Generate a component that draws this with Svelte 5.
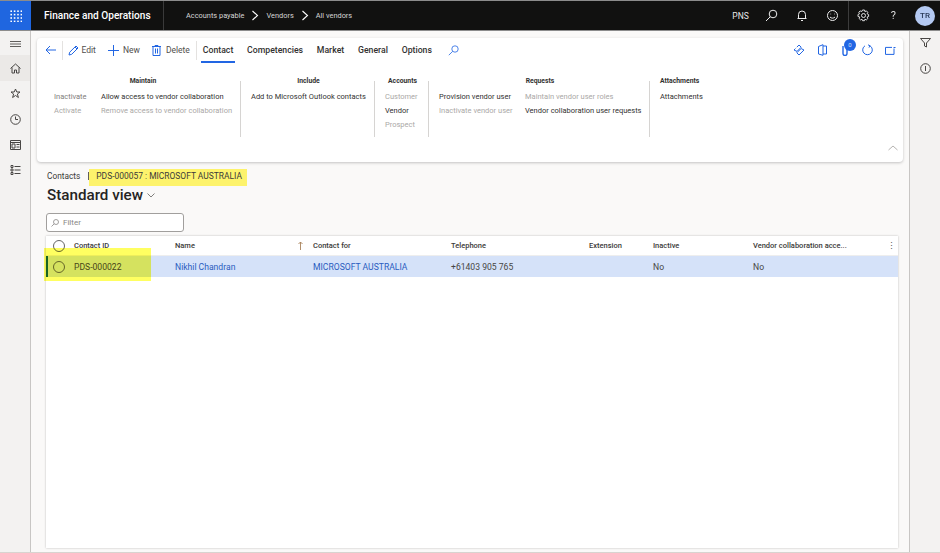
<script>
  const crumbs = ["Vendors", "All vendors"];
  const tabs = ["Competencies", "Market", "General", "Options"];
  const columns = [
    { label: "Contact ID", w: 101 },
    { label: "Name", w: 138, sort: true },
    { label: "Contact for", w: 138 },
    { label: "Telephone", w: 138 },
    { label: "Extension", w: 64 },
    { label: "Inactive", w: 100 },
    { label: "Vendor collaboration acce...", w: 130 }
  ];
  const row = [
    { text: "PDS-000022", w: 101 },
    { text: "Nikhil Chandran", w: 138, link: true },
    { text: "MICROSOFT AUSTRALIA", w: 138, link: true },
    { text: "+61403 905 765", w: 138 },
    { text: "", w: 64 },
    { text: "No", w: 100 },
    { text: "No", w: 130 }
  ];
</script>

<div class="page">
  <header class="topbar">
    <button class="waffle" aria-label="Apps">
      <svg width="12" height="12" viewBox="0 0 12 12" fill="#fff">
        {#each [0, 1, 2, 3] as y}
          {#each [0, 1, 2, 3] as x}
            <rect x={x * 3.4 + 0.4} y={y * 3.4 + 0.4} width="1.6" height="1.6" />
          {/each}
        {/each}
      </svg>
    </button>
    <div class="brand">Finance and Operations</div>
    <nav class="crumbs">
      <span>Accounts payable</span>
      {#each crumbs as c}
        <svg width="8" height="11" viewBox="0 0 8 11" fill="none" stroke="#fff" stroke-width="1.1"><path d="M1.5 1l5 4.500-5 4.500" /></svg>
        <span>{c}</span>
      {/each}
    </nav>
    <div class="top-right">
      <span class="company">PNS</span>
      <svg class="t-search" width="13" height="13" viewBox="0 0 13 13" fill="none" stroke="#eee" stroke-width="1"><circle cx="8" cy="5" r="3.800" /><path d="M5.200 7.800L1 12" /></svg>
      <svg class="t-bell" width="12" height="13" viewBox="0 0 12 13" fill="none" stroke="#eee" stroke-width="1"><path d="M2.500 9.500V5.500a3.500 3.500 0 017 0v4zM1.500 9.500h9M5 11.500h2" /></svg>
      <svg class="t-smile" width="13" height="13" viewBox="0 0 13 13" fill="none" stroke="#eee" stroke-width="1"><circle cx="6.500" cy="6.500" r="5" /><path d="M4 8c1.300 1.500 3.700 1.500 5 0M4.500 5h.6M8 5h.6" /></svg>
      <span class="top-sep"></span>
      <svg class="t-gear" width="13" height="13" viewBox="0 0 13 13" fill="none" stroke="#ddd" stroke-width="1"><circle cx="6.500" cy="6.500" r="2" /><path d="M5.500 1h2l.4 1.600 1.500-.7 1.400 1.400-.7 1.500 1.500.7v2l-1.500.5.700 1.500-1.400 1.400-1.500-.7-.4 1.500h-2l-.5-1.500-1.500.7-1.400-1.400.7-1.500L1 7.500v-2l1.500-.7-.7-1.500 1.400-1.400 1.500.7z" /></svg>
      <span class="t-help">?</span>
      <span class="avatar">TR</span>
    </div>
  </header>

  <div class="body">
    <aside class="rail">
      <svg class="r-icon" width="11" height="6" viewBox="0 0 11 6" stroke="#605e5c" stroke-width="1"><path d="M0 .5h11M0 3h11M0 5.500h11" /></svg>
      <div class="home">
        <svg width="11" height="11" viewBox="0 0 11 11" fill="none" stroke="#484644" stroke-width="1"><path d="M.5 5.500L5.500 1l5 4.500M2 4.500V10h2.500V7h2v3H9V4.500" /></svg>
      </div>
      <svg class="r-icon" width="11" height="11" viewBox="0 0 11 11" fill="none" stroke="#484644" stroke-width="1"><path d="M5.500 1l1.300 3h3.200L7.400 6l1 3.500-2.900-2-2.900 2 1-3.500L1 4h3.200z" /></svg>
      <svg class="r-icon" width="11" height="11" viewBox="0 0 11 11" fill="none" stroke="#484644" stroke-width="1"><circle cx="5.500" cy="5.500" r="4.800" /><path d="M5.500 2.500v3h2.500" /></svg>
      <svg class="r-icon" width="11" height="10" viewBox="0 0 11 10" fill="none" stroke="#484644" stroke-width="1"><path d="M.5.500h10v9H.5zM.5 2.500h10" /><path d="M2 4h3v4H2zM6.500 4.500h3M6.500 7h3" /></svg>
      <svg class="r-icon" width="11" height="10" viewBox="0 0 11 10" fill="none" stroke="#484644" stroke-width="1"><path d="M1 .5h2v2H1zM1 4h2v2H1zM1 7.500h2v2H1zM4.500 1.500h6M4.500 5h6M4.500 8.500h6" /></svg>
    </aside>

    <main class="main">
      <section class="ribbon">
        <div class="actions">
          <svg class="back" width="11" height="10" viewBox="0 0 11 10" fill="none" stroke="#2266e3" stroke-width="1"><path d="M11 5H1M5 1L1 5l4 4" /></svg>
          <span class="a-sep"></span>
          <svg class="a-edit" width="11" height="11" viewBox="0 0 11 11" fill="none" stroke="#2266e3" stroke-width="1"><path d="M1 10l.7-2.800L8 1l2 2-6.300 6.300zM7 2l2 2" /></svg>
          <span class="a-label e">Edit</span>
          <svg class="a-new" width="11" height="11" viewBox="0 0 11 11" stroke="#2266e3" stroke-width="1"><path d="M5.500 0v11M0 5.500h11" /></svg>
          <span class="a-label n">New</span>
          <svg class="a-del" width="9" height="11" viewBox="0 0 9 11" fill="none" stroke="#2266e3" stroke-width="1"><path d="M0 1.500h9M3 1.500V.5h3v1M1 1.500v9h7v-9M3.500 3.500v5M5.500 3.500v5" /></svg>
          <span class="a-label d">Delete</span>
          <span class="a-sep s2"></span>
          <span class="tab active">Contact</span>
          {#each tabs as t}
            <span class="tab">{t}</span>
          {/each}
          <svg class="a-search" width="11" height="11" viewBox="0 0 11 11" fill="none" stroke="#2266e3" stroke-width=".8"><circle cx="7" cy="4" r="3.200" /><path d="M4.600 6.400L.8 10.200" /></svg>
          <div class="a-right">
            <svg width="12" height="12" viewBox="0 0 12 12" fill="none" stroke="#2266e3" stroke-width="1"><path d="M3.800 3.200L6 1l2.200 2.200L4 7.400 1 6l1.500-1.500M8.200 4.600L11 6 6 11 3.800 8.800 8 4.600" /></svg>
            <svg class="door" width="9" height="12" viewBox="0 0 9 12" fill="none" stroke="#2266e3" stroke-width="1"><path d="M.5 2.500L5 .7v10.600L.5 10zM5 2h3.500v8H5" /></svg>
            <span class="bubble">
              <svg width="6" height="12" viewBox="0 0 6 12" fill="none" stroke="#2266e3" stroke-width="1.400"><path d="M1 2v7.500a2 2 0 004 0V4" /></svg>
              <b>0</b>
            </span>
            <svg width="11" height="12" viewBox="0 0 11 12" fill="none" stroke="#2266e3" stroke-width="1"><path d="M3 1.800a4.800 4.800 0 105 0M6 .8L8 1.800 7 3.600" /></svg>
            <svg width="11" height="10" viewBox="0 0 11 10" fill="none" stroke="#2266e3" stroke-width="1"><path d="M9 3.500v5.900H.5v-7H7M8.500 2.500h2" /></svg>
          </div>
        </div>

        <div class="groups">
          <div class="group maintain">
            <h4>Maintain</h4>
            <div class="cols">
              <div class="col first"><span class="mid">Inactivate</span><span class="off">Activate</span></div>
              <div class="col"><span>Allow access to vendor collaboration</span><span class="off">Remove access to vendor collaboration</span></div>
            </div>
          </div>
          <div class="group include">
            <h4>Include</h4>
            <div class="cols"><div class="col"><span>Add to Microsoft Outlook contacts</span></div></div>
          </div>
          <div class="group accounts">
            <h4>Accounts</h4>
            <div class="cols"><div class="col"><span class="off">Customer</span><span>Vendor</span><span class="off">Prospect</span></div></div>
          </div>
          <div class="group requests">
            <h4>Requests</h4>
            <div class="cols">
              <div class="col first"><span>Provision vendor user</span><span class="off">Inactivate vendor user</span></div>
              <div class="col"><span class="off">Maintain vendor user roles</span><span>Vendor collaboration user requests</span></div>
            </div>
          </div>
          <div class="group last">
            <h4>Attachments</h4>
            <div class="cols"><div class="col"><span>Attachments</span></div></div>
          </div>
        </div>
        <svg class="collapse" width="10" height="6" viewBox="0 0 10 6" fill="none" stroke="#b5b3b1" stroke-width="1"><path d="M.5 5L5 1l4.500 4" /></svg>
      </section>

      <div class="caption">
        <span>Contacts</span><span class="bar"></span><span class="record">PDS-000057 : MICROSOFT AUSTRALIA</span>
      </div>
      <div class="title">
        <h1>Standard view</h1>
        <svg width="8" height="5" viewBox="0 0 8 5" fill="none" stroke="#605e5c" stroke-width=".8"><path d="M.5.500L4 4 7.500.5" /></svg>
      </div>
      <div class="filter">
        <svg width="8" height="8" viewBox="0 0 8 8" fill="none" stroke="#8a8886" stroke-width=".8"><circle cx="5" cy="3" r="2.500" /><path d="M3.200 4.800L.5 7.500" /></svg>
        <span>Filter</span>
      </div>

      <div class="grid">
        <div class="grid-row head">
          <span class="check"><i></i></span>
          {#each columns as c}
            <span class="cell" style="width:{c.w}px">
              {c.label}
              {#if c.sort}
                <svg class="sort" width="5" height="9" viewBox="0 0 5 9" fill="none" stroke="#a8825a" stroke-width=".9"><path d="M2.500 9V1M.5 3l2-2 2 2" /></svg>
              {/if}
            </span>
          {/each}
          <span class="more">⋮</span>
        </div>
        <div class="grid-row selected">
          <span class="check"><i></i></span>
          {#each row as c}
            <span class="cell" class:link={c.link} style="width:{c.w}px">{c.text}</span>
          {/each}
        </div>
      </div>
      <div class="mark"></div>
    </main>

    <aside class="rail right">
      <svg width="11" height="10" viewBox="0 0 11 10" fill="none" stroke="#484644" stroke-width="1"><path d="M.5.500h10L6.500 5v4l-2-1V5z" /></svg>
      <svg width="11" height="11" viewBox="0 0 11 11" fill="none" stroke="#484644" stroke-width="1"><circle cx="5.500" cy="5.500" r="4.800" /><path d="M5.500 3v5" /></svg>
    </aside>
  </div>
</div>

<style>
  :global(body) {
    background: #faf9f8;
  }

  .page {
    width: 940px;
    height: 553px;
    overflow: hidden;
    display: flex;
    flex-direction: column;
    font-family: Roboto, "Noto Sans", sans-serif;
    color: #323130;
    filter: blur(0.4px);
  }

  .topbar {
    height: 29px;
    flex: none;
    display: flex;
    align-items: center;
    background: #111110;
    border-top: 1px solid #8c8c8c;
    border-bottom: 1px solid #8c8c8c;
    color: #fff;
  }

  .waffle {
    width: 31px;
    height: 29px;
    border: 0;
    padding: 0;
    background: #1f66e0;
    display: flex;
    align-items: center;
    justify-content: center;
  }

  .brand {
    width: 119px;
    padding-left: 13px;
    font-size: 10.100px;
    font-weight: 500;
    line-height: 29px;
    white-space: nowrap;
    border-right: 1px solid #3a3a3a;
    margin-right: 22px;
  }

  .crumbs {
    display: flex;
    align-items: center;
    gap: 7px;
    font-size: 7.400px;
    color: #d6d6d6;
    white-space: nowrap;
  }

  .top-right {
    margin-left: auto;
    display: flex;
    align-items: center;
    height: 29px;
  }

  .company {
    font-size: 8.500px;
    color: #e8e8e8;
    margin-right: 16px;
  }

  .t-search {
    margin-right: 18px;
  }

  .t-bell {
    margin-right: 18px;
  }

  .t-smile {
    margin-right: 9px;
  }

  .top-sep {
    width: 1px;
    height: 29px;
    background: #3c3c3c;
    margin-right: 8px;
  }

  .t-gear {
    margin-right: 21px;
  }

  .t-help {
    font-size: 11px;
    color: #ddd;
    margin-right: 19px;
  }

  .avatar {
    width: 20px;
    height: 20px;
    border-radius: 50%;
    background: #b4c9f2;
    color: #2a3a58;
    font-size: 8px;
    font-weight: 500;
    display: flex;
    align-items: center;
    justify-content: center;
    margin-right: 5px;
  }

  .body {
    flex: 1;
    display: flex;
    min-height: 0;
    border-bottom: 1px solid #d8d4d0;
  }

  .rail {
    width: 30px;
    flex: none;
    background: #f3f2f1;
    border-right: 1px solid #c8c6c4;
    display: flex;
    flex-direction: column;
    align-items: center;
  }

  .r-icon {
    margin-bottom: 15px;
  }

  .r-icon:first-child {
    margin-top: 10px;
    margin-bottom: 8px;
  }

  .home {
    width: 100%;
    height: 26px;
    background: #ebe9e7;
    display: flex;
    align-items: center;
    justify-content: center;
    margin-bottom: 7px;
  }

  .rail.right {
    border-right: 0;
    border-left: 1px solid #c8c6c4;
    padding-top: 7px;
    gap: 15px;
  }

  .main {
    flex: 1;
    position: relative;
    padding: 7px 6px 0 6px;
    background: #faf9f8;
    min-width: 0;
  }

  .ribbon {
    position: relative;
    height: 124px;
    background: #fff;
    border-radius: 4px;
    box-shadow: 0 1px 3px rgba(0, 0, 0, 0.22);
    box-sizing: border-box;
  }

  .actions {
    height: 24px;
    display: flex;
    align-items: center;
    font-size: 8.500px;
  }

  .back {
    margin-left: 8px;
  }

  .a-sep {
    width: 1px;
    height: 19px;
    background: #e4e2e0;
    margin-left: 6px;
  }

  .a-edit {
    margin-left: 5px;
  }

  .a-label {
    color: #504e4c;
    margin-left: 2.500px;
  }

  .a-new {
    margin-left: 12.500px;
  }

  .a-label.n {
    margin-left: 3.500px;
  }

  .a-del {
    margin-left: 12.500px;
  }

  .a-label.d {
    margin-left: 4.500px;
  }

  .s2 {
    margin-left: 6px;
    margin-right: 6px;
  }

  .tab {
    position: relative;
    font-size: 8.700px;
    font-weight: 500;
    color: #323130;
    margin-right: 13.800px;
    white-space: nowrap;
  }

  .tab.active::after {
    content: "";
    position: absolute;
    left: -2px;
    right: -2px;
    top: 15.500px;
    height: 2px;
    background: #2266e3;
  }

  .a-search {
    margin-left: 2.500px;
  }

  .a-right {
    margin-left: auto;
    margin-right: 7px;
    display: flex;
    align-items: center;
    gap: 12px;
  }

  .door {
    margin-left: 1px;
  }

  .bubble {
    position: relative;
    display: flex;
    margin-left: 3px;
    margin-right: 2px;
  }

  .bubble b {
    position: absolute;
    left: 2px;
    top: -5px;
    width: 12px;
    height: 12px;
    border-radius: 50%;
    background: #2266e3;
    color: #cfe0ff;
    font-size: 6px;
    font-weight: 400;
    line-height: 12px;
    text-align: center;
  }

  .groups {
    display: flex;
    margin-top: 19px;
    font-size: 7.500px;
    white-space: nowrap;
  }

  .group {
    box-sizing: border-box;
    height: 56px;
    border-right: 1px solid #d6d4d2;
    padding: 0 0 0 10px;
  }

  .group h4 {
    margin: -4px 0 6px;
    font-size: 6.800px;
    font-weight: 700;
    line-height: 9px;
    text-align: center;
    color: #323130;
    padding-right: 8px;
  }

  .cols {
    display: flex;
  }

  .col {
    display: flex;
    flex-direction: column;
    gap: 4px;
    line-height: 10px;
  }

  .maintain {
    width: 204px;
    padding-left: 17px;
  }

  .maintain .first {
    width: 47px;
  }

  .include {
    width: 134px;
  }

  .accounts {
    width: 54px;
  }

  .requests {
    width: 221px;
  }

  .requests .first {
    width: 86px;
  }

  .last {
    border-right: 0;
  }

  .off {
    color: #aaa8a6;
  }

  .mid {
    color: #7f7d7b;
  }

  .collapse {
    position: absolute;
    right: 5px;
    bottom: 11px;
  }

  .caption {
    display: flex;
    align-items: center;
    height: 21px;
    margin: 3px 0 0 10px;
    font-size: 8.300px;
    color: #3b3a39;
    white-space: nowrap;
  }

  .bar {
    width: 1px;
    height: 8px;
    background: #605e5c;
    margin: 0 7px 0 8px;
  }

  .record {
    align-self: flex-end;
    background: #fdf36c;
    padding: 0 5px 3px 7px;
    margin-left: -7px;
    font-size: 8.450px;
    line-height: 14px;
  }

  .title {
    display: flex;
    align-items: center;
    gap: 4px;
    margin: -2px 0 0 10px;
    height: 22px;
  }

  .title h1 {
    margin: 0;
    font-size: 15.200px;
    font-weight: 500;
    line-height: 20px;
    color: #252423;
    white-space: nowrap;
  }

  .filter {
    box-sizing: border-box;
    width: 138px;
    height: 19px;
    margin: 7px 0 4px 9px;
    padding-left: 4px;
    display: flex;
    align-items: center;
    gap: 4px;
    background: #fff;
    border: 1px solid #a19f9d;
    border-radius: 3px;
    font-size: 8px;
    color: #8a8886;
  }

  .grid {
    box-sizing: border-box;
    height: 312px;
    margin-left: 9px;
    width: 852px;
    background: #fff;
    box-shadow: 0 0 2px rgba(0, 0, 0, 0.25);
  }

  .grid-row {
    display: flex;
    align-items: center;
    font-size: 7.800px;
    white-space: nowrap;
  }

  .head {
    height: 19px;
    font-size: 7.500px;
    font-weight: 500;
    color: #3b3a39;
    border-bottom: 1px solid #eeeeee;
    position: relative;
  }

  .selected {
    height: 21px;
    font-size: 8.600px;
    background: #d5e2f9;
    color: #484644;
    border-left: 2px solid #17635a;
    box-sizing: border-box;
  }

  .check {
    width: 28px;
    flex: none;
    display: flex;
    justify-content: center;
    box-sizing: border-box;
    padding-right: 2px;
  }

  .selected .check {
    width: 26px;
    padding-right: 4px;
  }

  .check i {
    width: 12px;
    height: 12px;
    border: 1px solid #666;
    border-radius: 50%;
    box-sizing: border-box;
  }

  .cell {
    flex: none;
    position: relative;
  }

  .link {
    color: #2a5cc0;
  }

  .sort {
    position: absolute;
    left: 122.500px;
    top: 0;
  }

  .more {
    position: absolute;
    right: 2px;
    font-size: 9px;
    font-weight: 400;
    color: #605e5c;
  }

  .mark {
    position: absolute;
    left: 13px;
    top: 217px;
    width: 107px;
    height: 33px;
    background: rgba(255, 255, 0, 0.62);
    mix-blend-mode: multiply;
  }
</style>
